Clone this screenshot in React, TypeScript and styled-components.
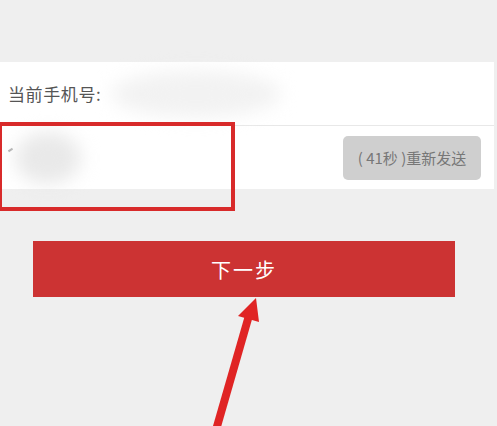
import { FC } from "react";
import styled, { createGlobalStyle } from "styled-components";

const GlobalStyle = createGlobalStyle`
  html, body {
    margin: 0;
    padding: 0;
    background: #efefef;
    font-family: "Noto Sans CJK SC", "Noto Sans", sans-serif;
  }
`;

const App: FC = () => (
  <StyledPage>
    <GlobalStyle />
    <StyledPanel>
      <StyledRow>
        <StyledLabel>当前手机号:</StyledLabel>
        <StyledBlur $w={170} $h={46} $gap={10} $tone="#f2f2f2" />
      </StyledRow>
      <StyledRow $tall>
        <StyledCodeInput>
          <StyledCaret />
          <StyledBlur $w={66} $h={52} $gap={2} $tone="#e9e9e9" />
        </StyledCodeInput>
        <StyledResend>( 41秒 )重新发送</StyledResend>
      </StyledRow>
    </StyledPanel>
    <StyledNext>下一步</StyledNext>

    {/* annotations drawn over the screenshot */}
    <StyledHighlight />
    <StyledArrow width="497" height="426" viewBox="0 0 497 426">
      <line x1="216" y1="430" x2="250" y2="312" stroke="#e02424" strokeWidth="8" />
      <polygon points="256,298 238,316 259,322" fill="#e02424" />
    </StyledArrow>
  </StyledPage>
);

const StyledPage = styled.div`
  position: relative;
  width: 497px;
  height: 426px;
  overflow: hidden;
  padding-top: 62px;
  box-sizing: border-box;
`;

const StyledPanel = styled.section`
  width: 494px;
  background: #ffffff;
`;

const StyledRow = styled.div<{ $tall?: boolean }>`
  display: flex;
  align-items: center;
  height: ${({ $tall }) => ($tall ? "64px" : "63px")};
  padding: 0 13px 0 8px;
  box-sizing: border-box;

  & + & {
    border-top: 1px solid #e8e8e8;
  }
`;

const StyledLabel = styled.span`
  font-size: 17px;
  color: #555555;
  letter-spacing: 0.6px;
`;

const StyledBlur = styled.span<{ $w: number; $h: number; $gap: number; $tone: string }>`
  display: block;
  width: ${({ $w }) => $w}px;
  height: ${({ $h }) => $h}px;
  margin-left: ${({ $gap }) => $gap}px;
  border-radius: 50%;
  background: ${({ $tone }) => $tone};
  filter: blur(9px);
`;

const StyledCodeInput = styled.div`
  display: flex;
  align-items: center;
  flex: 1;
  height: 100%;
`;

const StyledCaret = styled.span`
  width: 5px;
  height: 2px;
  background: #aaaaaa;
  transform: rotate(-35deg);
  margin-top: -16px;
`;

const StyledResend = styled.button`
  width: 138px;
  height: 44px;
  border: none;
  border-radius: 5px;
  background: #cfcfcf;
  color: #777777;
  font-family: "Noto Sans CJK SC", "Noto Sans", sans-serif;
  font-size: 15px;
  padding: 0;
`;

const StyledNext = styled.button`
  display: block;
  width: 422px;
  height: 56px;
  margin: 52px 0 0 33px;
  border: none;
  background: #cc3333;
  color: #ffffff;
  font-family: "Noto Sans CJK SC", "Noto Sans", sans-serif;
  font-size: 20px;
  letter-spacing: 2px;
`;

const StyledHighlight = styled.div`
  position: absolute;
  left: -2px;
  top: 122px;
  width: 237px;
  height: 89px;
  border: 4px solid #d82a2a;
  box-sizing: border-box;
`;

const StyledArrow = styled.svg`
  position: absolute;
  left: 0;
  top: 0;
`;

export default App;
